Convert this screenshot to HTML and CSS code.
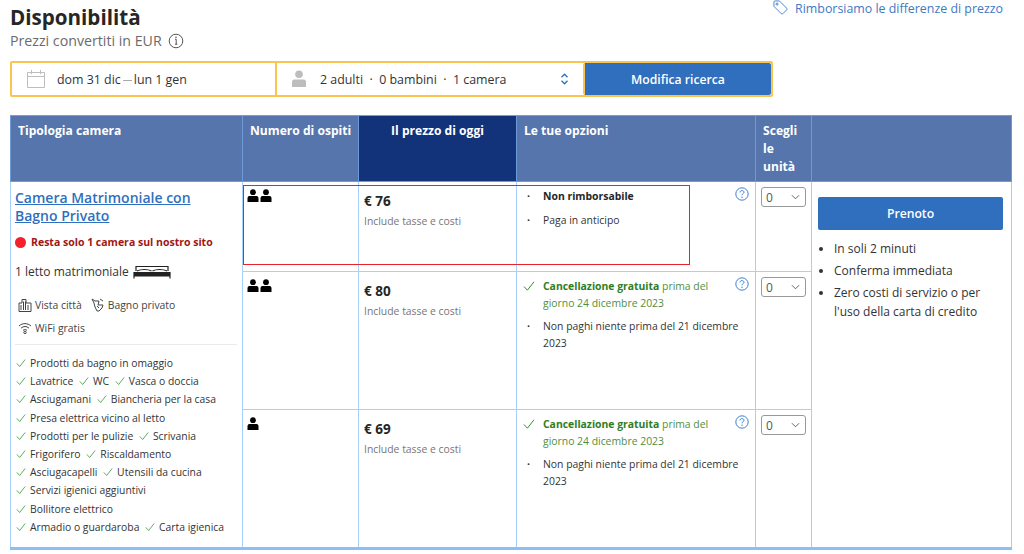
FILE: index.html
```html
<!DOCTYPE html>
<html lang="it">
<head>
<meta charset="utf-8">
<title>Disponibilità</title>
<link rel="stylesheet" href="styles.css">
</head>
<body>
<svg class="defs" width="0" height="0" aria-hidden="true">
  <symbol id="person" viewBox="0 0 12 13"><circle cx="6" cy="3.2" r="2.9" fill="#000"/><path d="M0.5 13V9.4C0.5 7.6 1.6 7 3 7H9C10.4 7 11.5 7.6 11.5 9.4V13Z" fill="#000"/></symbol>
  <symbol id="check" viewBox="0 0 12 12"><path d="M1 6.5 4.4 10.2 11 1.8" fill="none" stroke="currentColor" stroke-width="1"/></symbol>
  <symbol id="help" viewBox="0 0 14 14"><circle cx="7" cy="7" r="6.2" fill="none" stroke="#3f7fd0" stroke-width="1"/><path d="M5 5.4C5 4.2 5.9 3.6 7 3.6S9 4.3 9 5.3C9 6.6 7 6.7 7 8.3" fill="none" stroke="#3f7fd0" stroke-width="1"/><circle cx="7" cy="10.2" r=".7" fill="#3f7fd0"/></symbol>
</svg>
<header class="top">
  <div>
    <h1 class="title">Disponibilità</h1>
    <p class="subtitle">Prezzi convertiti in EUR
      <svg class="info" viewBox="0 0 16 16"><circle cx="8" cy="8" r="6.8" fill="none" stroke="#555" stroke-width="1"/><path d="M7 6.2H8.2V11.2M7 11.2H9.4" fill="none" stroke="#555" stroke-width="1"/><circle cx="8" cy="4.3" r=".8" fill="#555"/></svg>
    </p>
  </div>
  <a class="refund" href="#">
    <svg class="tag" viewBox="0 0 16 16"><path d="M1 2.2C1 1.5 1.5 1 2.2 1H6.8L14.6 8.8C15.1 9.3 15.1 10 14.6 10.5L10.5 14.6C10 15.1 9.3 15.1 8.8 14.6L1 6.8Z" fill="none" stroke="#3f7fd0" stroke-width="1"/><circle cx="4.3" cy="4.3" r="1.1" fill="none" stroke="#3f7fd0" stroke-width="1"/></svg>
    Rimborsiamo le differenze di prezzo</a>
</header>

<form class="search">
  <div class="field dates">
    <svg class="cal" viewBox="0 0 20 20"><path d="M1.5 3.5H18.5V18.5H1.5ZM1.5 7.5H18.5M5.5 1V5M14.5 1V5" fill="none" stroke="#bdbdbd" stroke-width="1"/></svg>
    <span>dom 31 dic<span class="dash"></span>lun 1 gen</span>
  </div>
  <div class="field guests">
    <svg class="guest" viewBox="0 0 16 18"><circle cx="8" cy="4.2" r="3.8" fill="#bdbdbd"/><path d="M1 17V12C1 10.2 2.4 9.6 4 9.6H12C13.6 9.6 15 10.2 15 12V17Z" fill="#bdbdbd"/></svg>
    <span class="guest-text">2 adulti &nbsp;·&nbsp; 0 bambini &nbsp;·&nbsp; 1 camera</span>
    <svg class="updown" viewBox="0 0 8 12"><path d="M1 4.2 4 1.2 7 4.2M1 7.8 4 10.8 7 7.8" fill="none" stroke="#2f6fbd" stroke-width="1.3"/></svg>
  </div>
  <button class="modify" type="button">Modifica ricerca</button>
</form>

<div class="table-wrap">
<table class="rooms">
  <colgroup><col class="c1"><col class="c2"><col class="c3"><col class="c4"><col class="c5"><col class="c6"></colgroup>
  <thead>
    <tr>
      <th>Tipologia camera</th>
      <th class="nowrap">Numero di ospiti</th>
      <th class="today">Il prezzo di oggi</th>
      <th>Le tue opzioni</th>
      <th>Scegli le unità</th>
      <th></th>
    </tr>
  </thead>
  <tbody>
    <tr class="r1">
      <td rowspan="3" class="room">
        <a class="room-name" href="#">Camera Matrimoniale con<br>Bagno Privato</a>
        <p class="scarce"><span class="dot"></span>Resta solo 1 camera sul nostro sito</p>
        <p class="bed">1 letto matrimoniale
          <svg class="bedicon" viewBox="0 0 38 14"><path d="M3 6V1.5H35V6M1 7.5H37V11H1ZM1 11V13.5M37 11V13.5M4 6C8 4 15 4 18.5 6M19.5 6C23 4 30 4 34 6" fill="none" stroke="#222" stroke-width="1.2"/><rect x="1" y="7.5" width="36" height="3.5" fill="#222"/></svg>
        </p>
        <div class="feats">
          <span class="feat"><svg class="fi" viewBox="0 0 14 14"><path d="M1 13.5V5H4V1.5H8V5H13V13.5ZM3 7V12M5.5 3.5V12M7.5 3.5V12M10 7V12" fill="none" stroke="#444" stroke-width="1"/></svg>Vista città</span>
          <span class="feat"><svg class="fi" viewBox="0 0 14 14"><path d="M1 1 4 3 8 3 7 7H12L11 10 8 13H6L4 9 3 5ZM9 1 12 3M6 8 8 10" fill="none" stroke="#444" stroke-width="1"/></svg>Bagno privato</span>
          <span class="feat"><svg class="fi" viewBox="0 0 14 14"><path d="M1 5C4.5 1.8 9.5 1.8 13 5M3 7.2C5.5 5 8.5 5 11 7.2M5 9.4C6.2 8.4 7.8 8.4 9 9.4" fill="none" stroke="#444" stroke-width="1"/><circle cx="7" cy="11.5" r="1.2" fill="none" stroke="#444"/></svg>WiFi gratis</span>
        </div>
        <ul class="amen">
          <li><svg class="ck"><use href="#check"/></svg>Prodotti da bagno in omaggio</li>
          <li><svg class="ck"><use href="#check"/></svg>Lavatrice <svg class="ck mid"><use href="#check"/></svg>WC <svg class="ck mid"><use href="#check"/></svg>Vasca o doccia</li>
          <li><svg class="ck"><use href="#check"/></svg>Asciugamani <svg class="ck mid"><use href="#check"/></svg>Biancheria per la casa</li>
          <li><svg class="ck"><use href="#check"/></svg>Presa elettrica vicino al letto</li>
          <li><svg class="ck"><use href="#check"/></svg>Prodotti per le pulizie <svg class="ck mid"><use href="#check"/></svg>Scrivania</li>
          <li><svg class="ck"><use href="#check"/></svg>Frigorifero <svg class="ck mid"><use href="#check"/></svg>Riscaldamento</li>
          <li><svg class="ck"><use href="#check"/></svg>Asciugacapelli <svg class="ck mid"><use href="#check"/></svg>Utensili da cucina</li>
          <li><svg class="ck"><use href="#check"/></svg>Servizi igienici aggiuntivi</li>
          <li><svg class="ck"><use href="#check"/></svg>Bollitore elettrico</li>
          <li><svg class="ck"><use href="#check"/></svg>Armadio o guardaroba <svg class="ck mid"><use href="#check"/></svg>Carta igienica</li>
        </ul>
      </td>
      <td class="occ"><svg class="pers"><use href="#person"/></svg><svg class="pers"><use href="#person"/></svg></td>
      <td class="price"><strong>€ 76</strong><small>Include tasse e costi</small></td>
      <td class="opts">
        <svg class="help"><use href="#help"/></svg>
        <p class="opt"><span class="bul">•</span><b>Non rimborsabile</b></p>
        <p class="opt"><span class="bul">•</span>Paga in anticipo</p>
      </td>
      <td class="qty"><span class="sel">0<svg class="chev" viewBox="0 0 10 6"><path d="M1 1 5 5 9 1" fill="none" stroke="#555"/></svg></span></td>
      <td rowspan="3" class="book">
        <button class="prenoto" type="button">Prenoto</button>
        <ul class="perks">
          <li>In soli 2 minuti</li>
          <li>Conferma immediata</li>
          <li>Zero costi di servizio o per<br>l'uso della carta di credito</li>
        </ul>
      </td>
    </tr>
    <tr class="r2">
      <td class="occ"><svg class="pers"><use href="#person"/></svg><svg class="pers"><use href="#person"/></svg></td>
      <td class="price"><strong>€ 80</strong><small>Include tasse e costi</small></td>
      <td class="opts">
        <svg class="help"><use href="#help"/></svg>
        <p class="opt green"><svg class="bigck"><use href="#check"/></svg><span><b>Cancellazione gratuita</b> prima del<br>giorno 24 dicembre 2023</span></p>
        <p class="opt"><span class="bul">•</span><span>Non paghi niente prima del 21 dicembre<br>2023</span></p>
      </td>
      <td class="qty"><span class="sel">0<svg class="chev" viewBox="0 0 10 6"><path d="M1 1 5 5 9 1" fill="none" stroke="#555"/></svg></span></td>
    </tr>
    <tr class="r3">
      <td class="occ"><svg class="pers"><use href="#person"/></svg></td>
      <td class="price"><strong>€ 69</strong><small>Include tasse e costi</small></td>
      <td class="opts">
        <svg class="help"><use href="#help"/></svg>
        <p class="opt green"><svg class="bigck"><use href="#check"/></svg><span><b>Cancellazione gratuita</b> prima del<br>giorno 24 dicembre 2023</span></p>
        <p class="opt"><span class="bul">•</span><span>Non paghi niente prima del 21 dicembre<br>2023</span></p>
      </td>
      <td class="qty"><span class="sel">0<svg class="chev" viewBox="0 0 10 6"><path d="M1 1 5 5 9 1" fill="none" stroke="#555"/></svg></span></td>
    </tr>
  </tbody>
</table>
<div class="redbox"></div>
</div>
</body>
</html>
```
FILE: styles.css
```css
* { box-sizing: border-box; }
html, body { margin: 0; height: 100%; }
body {
  background: #fff;
  color: #262626;
  font-family: "Open Sans", "Noto Sans", sans-serif;
  font-size: 12px;
  overflow: hidden;
  padding: 0 13px 0 10px;
}
.defs { position: absolute; }
p { margin: 0; }
ul { margin: 0; padding: 0; list-style: none; }

.top { display: flex; justify-content: space-between; align-items: flex-start; height: 61px; padding-right: 8px; }
.title { margin: 4px 0 0; font-size: 20.6px; line-height: 27px; font-weight: 700; color: #262626; }
.subtitle { margin-top: 0; font-size: 14.2px; line-height: 20px; color: #6b6b6b; display: flex; align-items: center; gap: 6px; }
.info { width: 16px; height: 16px; }
.refund { display: flex; align-items: center; gap: 7px; color: #3f78c4; text-decoration: none; font-size: 12.4px; line-height: 17px; }
.tag { width: 15px; height: 15px; margin-top: -2px; }

.search { display: flex; width: 763px; height: 36px; border: 2px solid #f9c44f; border-radius: 2px; }
.field { display: flex; align-items: center; font-size: 12.4px; color: #333; background: #fff; }
.dates { width: 265px; padding-left: 14px; border-right: 2px solid #f9c44f; }
.cal { width: 20px; height: 20px; margin-right: 11px; }
.dash { display: inline-block; width: 9px; height: 1px; background: #aaa; margin: 0 2px; vertical-align: middle; }
.guests { width: 306px; padding-left: 14px; }
.guest { width: 16px; height: 18px; margin-right: 13px; }
.guest-text { flex: 1; }
.updown { width: 9px; height: 12px; margin-right: 14px; }
.modify {
  flex: 1;
  border: 0; border-left: 2px solid #f9c44f;
  border-radius: 2px;
  background: #2f6fbd;
  color: #fff;
  font: 600 12.2px "Open Sans", sans-serif;
}

.table-wrap { position: relative; margin-top: 18px; width: 1001px; }
.rooms { table-layout: fixed; border-collapse: collapse; width: 1001px; }
.c1 { width: 232px; } .c2 { width: 116px; } .c3 { width: 158px; }
.c4 { width: 239px; } .c5 { width: 56px; } .c6 { width: 200px; }
th {
  height: 66px;
  background: #5575ac;
  color: #fff;
  font-size: 12.1px;
  line-height: 18px;
  font-weight: 700;
  text-align: left;
  vertical-align: top;
  padding: 6px 7px 3px;
  border: 1px solid #6f9ad8;
  border-top-color: #7a9cd0;
}
th.today { background: #12327a; text-align: center; }
th.nowrap { white-space: nowrap; }
td { border: 1px solid #a9d0fb; vertical-align: top; padding: 0; }
tbody { border-bottom: 3px solid #8cc0f5; }
.r1 td { height: 90px; }
.r2 td { height: 138px; }
.r3 td { height: 139px; }
.room, .book { height: auto !important; }

.room { padding: 7px 5px 0 4px; }
.room-name { display: block; font-size: 14px; line-height: 18px; font-weight: 600; color: #2f6fbd; }
.scarce { display: flex; align-items: center; margin-top: 9px; font-size: 10.5px; line-height: 16px; font-weight: 700; color: #a11616; white-space: nowrap; }
.dot { width: 11px; height: 11px; border-radius: 50%; background: #f4202a; margin-right: 5px; }
.bed { display: flex; align-items: center; gap: 4px; margin-top: 13px; font-size: 12px; line-height: 17px; color: #333; }
.bedicon { width: 38px; height: 14px; }
.feats { display: flex; flex-wrap: wrap; padding: 0 3px 8px; margin-top: 17px; color: #444; font-size: 10.4px; line-height: 16px; row-gap: 7px; column-gap: 9px; border-bottom: 1px solid #eaeaea; }
.feat { display: flex; align-items: center; gap: 1px; }
.feat:nth-child(3) { flex-basis: 100%; }
.fi { width: 14px; height: 14px; margin-right: 2px; }
.amen { margin-top: 9px; font-size: 10.35px; line-height: 18.2px; color: #333; }
.amen li { white-space: nowrap; }
.ck { width: 10px; height: 10px; color: #3e9a3e; margin: 0 4px 0 1px; vertical-align: -1px; }
.ck.mid { margin-left: 3px; }

.occ { padding: 7px 4px; white-space: nowrap; line-height: 0; }
.pers { width: 12px; height: 13px; margin-right: 0.5px; }
.price { padding: 10px 5px; }
.price strong { display: block; font-size: 13.5px; line-height: 19px; font-weight: 700; color: #262626; }
.price small { display: block; margin-top: 2px; font-size: 10.4px; line-height: 16px; color: #777; }

.opts { position: relative; padding: 6px 4px 0 6px; font-size: 10.4px; line-height: 16.5px; color: #333; }
.help { position: absolute; top: 5px; right: 6px; width: 14px; height: 14px; }
.opt { display: flex; margin-bottom: 7px; }
.bul { flex: none; width: 20px; padding-left: 4px; font-size: 8px; }
.opt b { font-weight: 700; color: #262626; }
.green { color: #4f8f3f; }
.green b { color: #2f7d26; }
.bigck { flex: none; width: 12px; height: 12px; margin: 2px 8px 0 0; color: #2f8f2f; }

.qty { padding: 5px 5px; }
.sel { display: flex; justify-content: space-between; align-items: center; width: 45px; height: 20px; padding: 0 5px 0 4px; border: 1px solid #999; border-radius: 3px; font-size: 12px; color: #555; }
.chev { width: 9px; height: 6px; }

.book { padding: 15px 7px 0 6px; }
.prenoto { display: block; width: 185px; height: 33px; border: 0; border-radius: 2px; background: #2f6fbd; color: #fff; font: 600 12.2px "Open Sans", sans-serif; }
.perks { margin-top: 9px; padding-left: 16px; list-style: disc; font-size: 12px; line-height: 19px; color: #333; }
.perks li { margin-bottom: 3px; }

.redbox { position: absolute; left: 233px; top: 70px; width: 447px; height: 80px; border: 1px solid #e8232b; pointer-events: none; }
```
